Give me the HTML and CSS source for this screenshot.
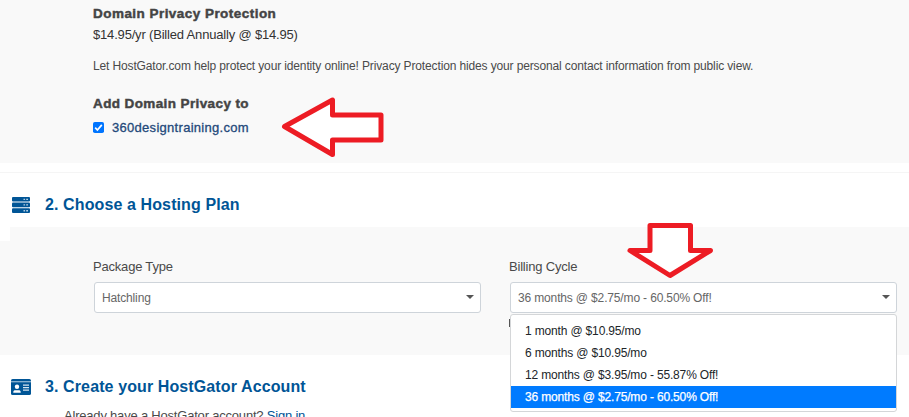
FILE: index.html
```html
<!DOCTYPE html>
<html lang="en">
<head>
<meta charset="utf-8">
<title>Choose a Hosting Plan</title>
<link rel="stylesheet" href="styles.css">
</head>
<body>
<section class="privacy">
  <h3 class="strong-title title-protect">Domain Privacy Protection</h3>
  <p class="price">$14.95/yr (Billed Annually @ $14.95)</p>
  <p class="description">Let HostGator.com help protect your identity online! Privacy Protection hides your personal contact information from public view.</p>
  <h3 class="strong-title title-add">Add Domain Privacy to</h3>
  <label class="domain">
    <svg class="checkbox" width="11" height="11" viewBox="0 0 11 11"><rect width="11" height="11" rx="1.8" fill="#0075ff"/><path d="M2.2 5.7 4.4 8 8.8 2.9" fill="none" stroke="#fff" stroke-width="1.7"/></svg>
    <span>360designtraining.com</span>
  </label>
  <svg class="arrow arrow-left" width="104" height="62" viewBox="0 0 104 62"><path d="M4.500 29.500 52.500 3V18H101V43H52.500V57.500Z"/></svg>
</section>

<header class="step step-plan">
  <svg class="icon" width="18" height="16" viewBox="0 0 18 16"><g fill="#005596"><rect width="18" height="4.600" rx="1"/><rect y="5.600" width="18" height="4.700" rx="1"/><rect y="11.300" width="18" height="4.700" rx="1"/></g><g fill="#b4cee1"><path d="M11.500 1.700h1.600v1.400h-1.600zM14.200 1.700h1.800v1.400h-1.800zM11.500 7.200h1.600v1.400h-1.600zM14.200 7.200h1.800v1.400h-1.800zM11.500 13h1.600v1.400h-1.600zM14.200 13h1.800v1.400h-1.800z"/></g></svg>
  <h2 class="step-title title-plan">2. Choose a Hosting Plan</h2>
</header>

<section class="plan">
  <div class="field">
    <span class="label label-package">Package Type</span>
    <div class="select"><span class="value-package">Hatchling</span><i class="caret"></i></div>
  </div>
  <div class="field">
    <span class="label label-billing">Billing Cycle</span>
    <div class="select"><span class="value-billing">36 months @ $2.75/mo - 60.50% Off!</span><i class="caret"></i></div>
    <i class="hidden-text-edge"></i>
    <ul class="menu">
      <li>1 month @ $10.95/mo</li>
      <li>6 months @ $10.95/mo</li>
      <li>12 months @ $3.95/mo - 55.87% Off!</li>
      <li class="selected">36 months @ $2.75/mo - 60.50% Off!</li>
    </ul>
  </div>
  <svg class="arrow arrow-down" width="90" height="58" viewBox="0 0 90 58"><path d="M24 4.500H64.500V29.500H84.500L44 54.500 4 29.500H24Z"/></svg>
</section>

<header class="step step-account">
  <svg class="icon" width="20" height="16" viewBox="0 0 20 16"><rect width="20" height="16" rx="1.600" fill="#005596"/><path d="M0 2.700h20" stroke="#8fb6d2" stroke-width="1.300"/><g fill="#fff"><circle cx="6" cy="7.700" r="2.200"/><path d="M2.300 13.800v-.8c0-1.200.8-1.800 2-1.800h3.400c1.200 0 2 .6 2 1.800v.8z"/></g><path d="M12 6.200h6M12 8.700h6M12 11.200h6" stroke="#d7e5ef" stroke-width="1.200"/></svg>
  <h2 class="step-title title-account">3. Create your HostGator Account</h2>
</header>
<p class="signin">Already have a HostGator account? <a>Sign in</a></p>
</body>
</html>
```
FILE: styles.css
```css
* { box-sizing: border-box; margin: 0; padding: 0; }
body { width: 909px; height: 417px; overflow: hidden; background: #fff; font: 13px/20px "Liberation Sans", Arial, sans-serif; color: #4a4a4a; }
.privacy { position: relative; height: 163px; padding: 4px 0 0 93px; background: #f9f9f9; white-space: nowrap; }
.strong-title { font-size: 13.5px; font-weight: 700; line-height: 20px; color: #444; -webkit-text-stroke: .45px #444; }
.title-protect { letter-spacing: .46px; }
.title-add { margin-top: 18px; letter-spacing: .39px; }
.price { height: 20px; line-height: 21px; letter-spacing: -.18px; color: #333; }
.description { margin-top: 12px; font-size: 12px; line-height: 20px; letter-spacing: -.135px; color: #4a4a4a; }
.domain { display: flex; align-items: center; gap: 8px; height: 24px; padding-top: 3px; color: #24497a; font-size: 13px; letter-spacing: .29px; -webkit-text-stroke: .3px #24497a; }
.arrow { position: absolute; overflow: visible; stroke: #ed1c24; stroke-width: 5; stroke-linejoin: round; }
.arrow path { fill: #fff; }
.arrow-left { left: 280px; top: 97px; }
.step { display: flex; align-items: center; white-space: nowrap; }
.step-plan { height: 55px; margin-top: 9px; padding: 9px 0 0 12px; border-top: 1px solid #f5f5f5; }
.step-title { font-size: 16px; font-weight: 700; line-height: 20px; letter-spacing: .11px; color: #005596; }
.step-plan .step-title { margin-left: 15px; }
.plan { position: relative; display: flex; gap: 29px; height: 128px; padding: 29px 0 0 93px; background: linear-gradient(#fff, #fff) 0 0 / 10px 14px no-repeat #f9f9f9; }
.field { position: relative; width: 387px; }
.label { display: block; height: 26px; line-height: 21px; letter-spacing: -.2px; white-space: nowrap; }
.select { display: flex; align-items: center; justify-content: space-between; width: 387px; height: 31px; margin-left: 1px; padding: 1px 6px 1px 7px; border: 1px solid #ced4da; border-radius: 3px; background: #fff; color: #666; font-size: 12px; letter-spacing: -.15px; white-space: nowrap; }
.caret { width: 0; height: 0; margin-top: -2px; border: 4px solid transparent; border-top-color: #555; border-bottom: 0; }
.hidden-text-edge { position: absolute; left: 0; top: 63px; width: 2px; height: 8px; background: #555; }
.menu { position: absolute; z-index: 1; left: 1px; top: 58px; width: 387px; height: 98px; padding: 5px 0; list-style: none; border: 1px solid #d4d6d8; border-radius: 3px; background: #fff; color: #212529; font-size: 12px; letter-spacing: -.16px; }
.menu li { height: 22px; padding-left: 14px; line-height: 22px; white-space: nowrap; }
.menu .selected { color: #fff; background: #007bff; -webkit-text-stroke: .25px #fff; }
.arrow-down { left: 626px; top: -6px; }
.step-account { height: 48px; padding: 15px 0 0 11px; }
.step-account .step-title { margin-left: 14px; }
.signin { padding-left: 64px; margin-top: 3px; line-height: 20px; letter-spacing: -.2px; white-space: nowrap; }
.signin a { color: #005596; }
```
